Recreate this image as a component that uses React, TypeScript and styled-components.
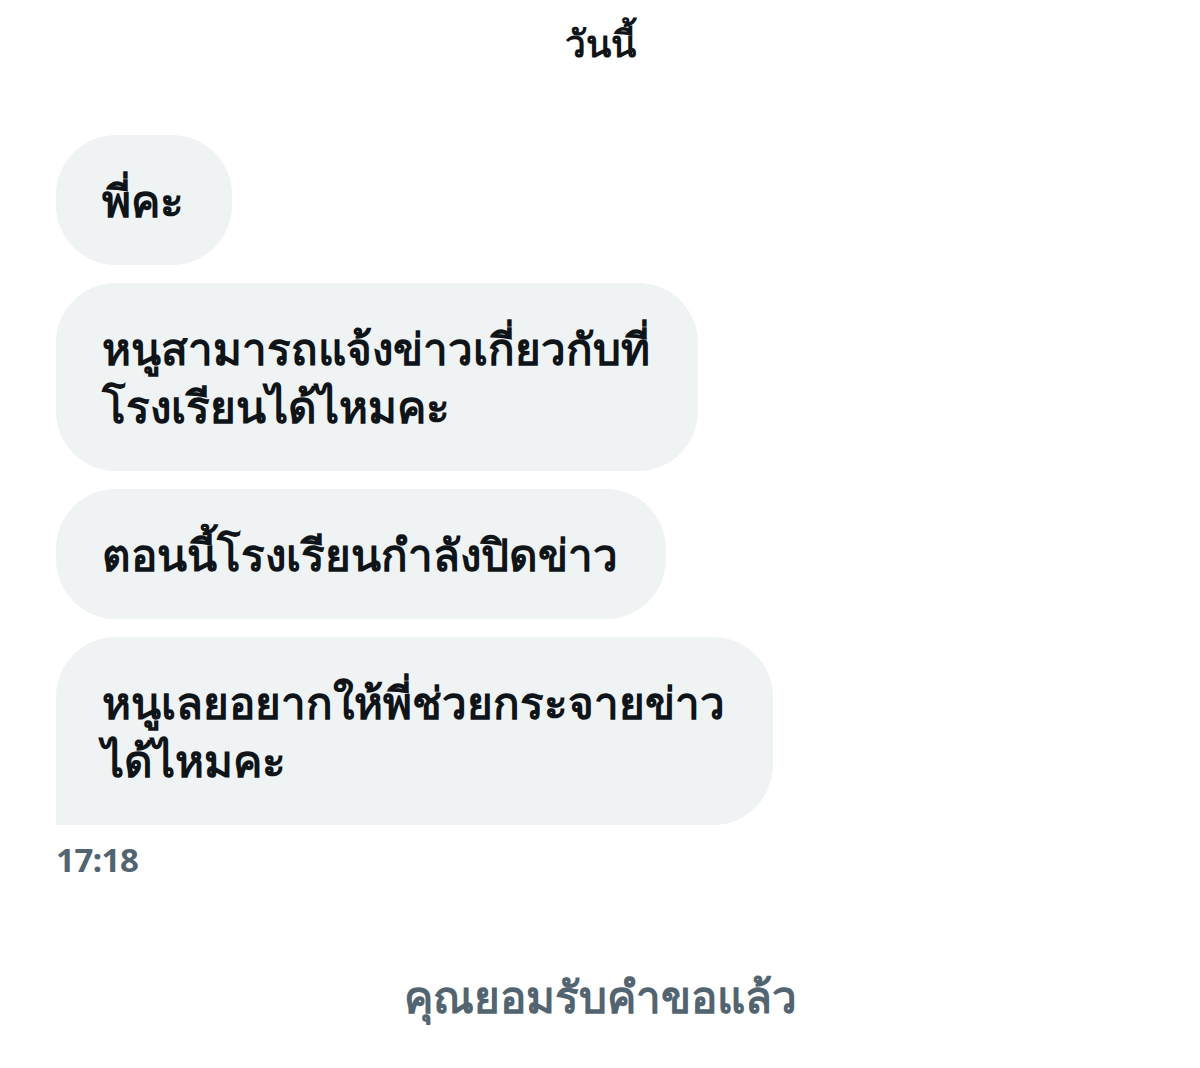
import styled, { createGlobalStyle } from "styled-components";

const GlobalStyle = createGlobalStyle`
    body {
        margin: 0;
        background: #ffffff;
        font-family: "Noto Sans", "DejaVu Sans", "Liberation Sans", sans-serif;
    }
`;

const Page = styled.div`
    width: 1200px;
    height: 1068px;
    display: flex;
    flex-direction: column;
    overflow: hidden;
`;

const DayLabel = styled.div`
    text-align: center;
    font-size: 37px;
    font-weight: 700;
    color: #0f1419;
    padding-top: 14px;
    height: 100px;
    box-sizing: border-box;
`;

const Thread = styled.div`
    display: flex;
    flex-direction: column;
    align-items: flex-start;
    gap: 18px;
    padding: 35px 0 0 56px;
`;

const Bubble = styled.div<{ $last?: boolean }>`
    background: #eff3f4;
    color: #0f1419;
    font-size: 44px;
    font-weight: 700;
    line-height: 58px;
    padding: 36px 48px 36px 46px;
    border-radius: ${p => p.$last ? "60px 60px 60px 0" : "60px"};
    white-space: nowrap;
`;

const Time = styled.div`
    margin: 12px 0 0 56px;
    font-size: 33px;
    font-weight: 700;
    color: #536471;
    letter-spacing: -0.5px;
`;

const Notice = styled.div`
    margin-top: 80px;
    text-align: center;
    font-size: 44px;
    font-weight: 700;
    color: #536471;
`;

const messages = [
    ["พี่คะ"],
    ["หนูสามารถแจ้งข่าวเกี่ยวกับที่", "โรงเรียนได้ไหมคะ"],
    ["ตอนนี้โรงเรียนกำลังปิดข่าว"],
    ["หนูเลยอยากให้พี่ช่วยกระจายข่าว", "ได้ไหมคะ"],
];

export default function App() {
    return (
        <Page>
            <GlobalStyle />
            <DayLabel>วันนี้</DayLabel>
            <Thread>
                {messages.map((lines, i) => (
                    <Bubble key={i} $last={i === messages.length - 1}>
                        {lines.map((l, j) => (
                            <div key={j}>{l}</div>
                        ))}
                    </Bubble>
                ))}
            </Thread>
            <Time>17:18</Time>
            <Notice>คุณยอมรับคำขอแล้ว</Notice>
        </Page>
    );
}
